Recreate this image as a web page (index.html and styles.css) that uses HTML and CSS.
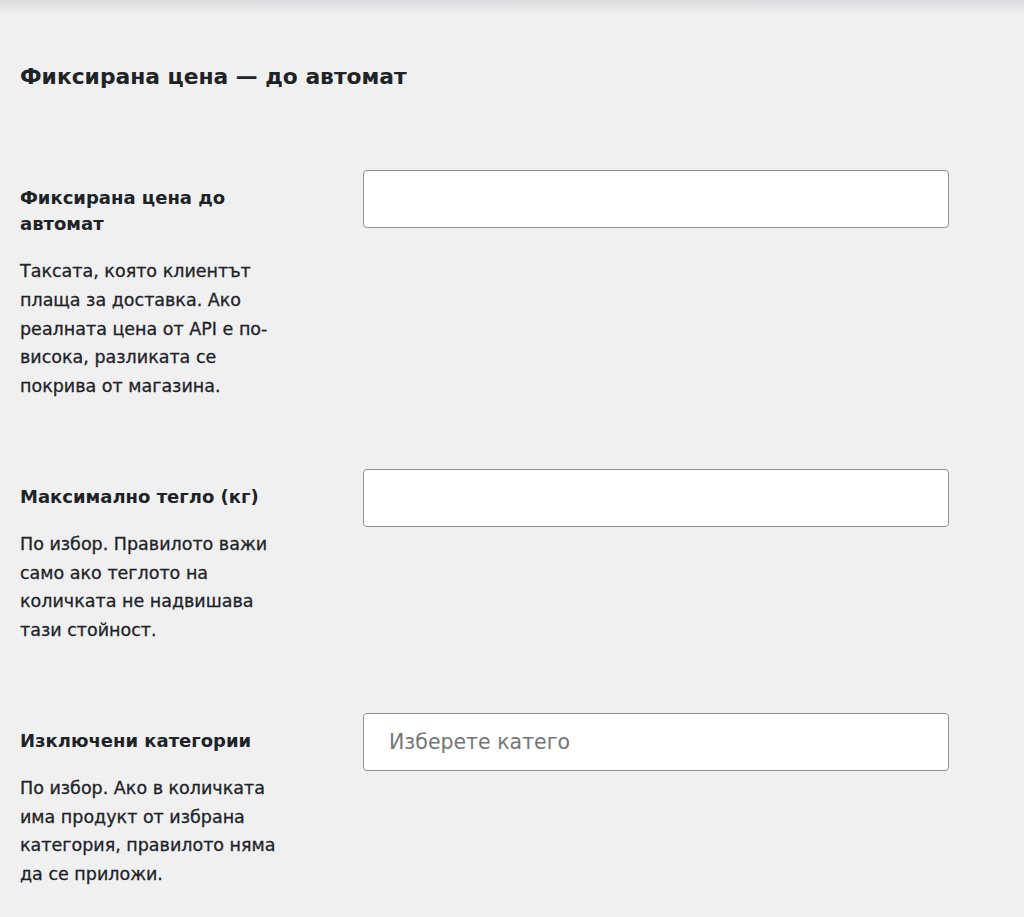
FILE: index.html
```html
<!DOCTYPE html>
<html lang="bg">
<head>
<meta charset="utf-8">
<title>Фиксирана цена — до автомат</title>
<link rel="stylesheet" href="styles.css">
</head>
<body>
<div class="page-shade"></div>
<main class="settings">
  <h2 class="section-title">Фиксирана цена — до автомат</h2>

  <div class="field-row">
    <div class="field-info">
      <label class="field-label" for="fixed-price">Фиксирана цена до автомат</label>
      <p class="field-desc">Таксата, която клиентът плаща за доставка. Ако реалната цена от API е по-висока, разликата се покрива от магазина.</p>
    </div>
    <div class="field-control">
      <input class="text-input" id="fixed-price" type="text">
    </div>
  </div>

  <div class="field-row">
    <div class="field-info">
      <label class="field-label" for="max-weight">Максимално тегло (кг)</label>
      <p class="field-desc">По избор. Правилото важи само ако теглото на количката не надвишава тази стойност.</p>
    </div>
    <div class="field-control">
      <input class="text-input" id="max-weight" type="text">
    </div>
  </div>

  <div class="field-row">
    <div class="field-info">
      <label class="field-label" for="excluded-cats">Изключени категории</label>
      <p class="field-desc">По избор. Ако в количката има продукт от избрана категория, правилото няма да се приложи.</p>
    </div>
    <div class="field-control">
      <div class="select-box" id="excluded-cats">
        <span class="select-placeholder">Изберете катего</span>
      </div>
    </div>
  </div>
</main>
</body>
</html>
```
FILE: styles.css
```css
html, body {
  margin: 0;
  padding: 0;
  background: #f0f0f1;
}

body {
  font-family: "DejaVu Sans", Inter, sans-serif;
  color: #1d2327;
  min-height: 917px;
}

.page-shade {
  height: 16px;
  background: linear-gradient(to bottom, #dcdcde, #f0f0f1);
}

.settings {
  padding: 0 20px 40px 20px;
}

.section-title {
  margin: 48px 0 0 0;
  font-size: 21.8px;
  line-height: 26px;
  font-weight: 700;
}

.field-row {
  display: grid;
  grid-template-columns: 343px 586px;
  margin-top: 80px;
}

.field-row + .field-row {
  margin-top: 68px;
}

.field-info {
  padding-top: 15px;
  width: 272px;
}

.field-label {
  display: block;
  font-size: 18px;
  line-height: 26px;
  font-weight: 700;
}

.field-desc {
  margin: 20px 0 0 0;
  font-size: 17.5px;
  line-height: 28.75px;
  font-weight: 400;
  color: #1d2327;
  -webkit-text-stroke: 0.3px #1d2327;
}

.text-input,
.select-box {
  box-sizing: border-box;
  display: block;
  width: 586px;
  height: 58px;
  margin: 0;
  background: #fff;
  border: 1.5px solid #8c8f94;
  border-radius: 4px;
  font: inherit;
}

.select-box {
  display: flex;
  align-items: center;
  padding-left: 25px;
}

.select-placeholder {
  font-size: 20.5px;
  color: #757575;
  font-weight: 400;
}
```
